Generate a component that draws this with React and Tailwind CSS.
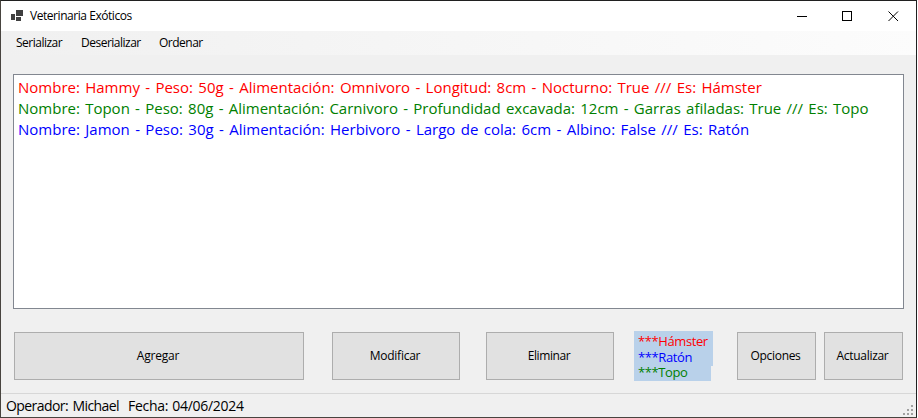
const entries = [
  {
    text: 'Nombre: Hammy - Peso: 50g - Alimentación: Omnivoro - Longitud: 8cm - Nocturno: True /// Es: Hámster',
    style: 'text-[#ff0000] [word-spacing:1.45px]',
  },
  {
    text: 'Nombre: Topon - Peso: 80g - Alimentación: Carnivoro - Profundidad excavada: 12cm - Garras afiladas: True /// Es: Topo',
    style: 'text-[#008000] [word-spacing:1.38px]',
  },
  {
    text: 'Nombre: Jamon - Peso: 30g - Alimentación: Herbivoro - Largo de cola: 6cm - Albino: False /// Es: Ratón',
    style: 'text-[#0000ff] [word-spacing:1.5px]',
  },
];

function Button({ className, children }) {
  return (
    <button
      className={`flex h-12 shrink-0 items-center justify-center border border-[#adadad] bg-[#e1e1e1] pr-[2px] text-[12px] ${className}`}
    >
      {children}
    </button>
  );
}

function TitleBar() {
  return (
    <header className="flex h-[30px] items-center bg-white pl-[10px] pr-[17px]">
      <svg width="12" height="11" viewBox="0 0 12 11" shapeRendering="crispEdges" className="mb-[2px]">
        <path fill="#3f3f3f" d="M0 4h4v6H0zM5 0h7v6H5zM5 7h5v4H5z" />
      </svg>
      <h1 className="ml-[7px] text-[12px] leading-4 tracking-[-0.45px]">Veterinaria Exóticos</h1>
      <div className="ml-auto flex items-center">
        <svg width="11" height="11" viewBox="0 0 11 11" shapeRendering="crispEdges">
          <path fill="#000" d="M0 5h10v1H0z" />
        </svg>
        <svg width="11" height="11" viewBox="0 0 11 11" shapeRendering="crispEdges" className="ml-[34px]">
          <path fill="none" stroke="#000" d="M.5.5h9v9h-9z" />
        </svg>
        <svg width="11" height="11" viewBox="0 0 11 11" className="ml-[35px]">
          <path fill="none" stroke="#000" d="M.5.5l9.5 9.5M10 .5L.5 10" />
        </svg>
      </div>
    </header>
  );
}

export default function App() {
  return (
    <div className="h-[418px] w-[918px] overflow-hidden bg-white font-['Open_Sans','Noto_Sans',sans-serif] text-black">
      <main className="flex h-[418px] w-[917px] flex-col border border-[#202020] border-b-[#48443f] border-l-[#48443f] bg-[#f0f0f0]">
        <TitleBar />
        <nav className="flex h-6 items-center bg-linear-to-r from-[#f0f0f0] to-[#fcfcfc] pl-[15px] text-[12px] tracking-[-0.5px]">
          <span className="w-[65px]">Serializar</span>
          <span className="w-[78px]">Deserializar</span>
          <span>Ordenar</span>
        </nav>
        <section className="ml-3 mt-[19px] h-[235px] w-[891px] border border-[#828790] bg-white pl-1 pt-[2px] text-[15px] leading-[21px]">
          {entries.map((entry) => (
            <p key={entry.text} className={`whitespace-nowrap ${entry.style}`}>
              {entry.text}
            </p>
          ))}
        </section>
        <section className="mt-[22px] flex h-[50px] items-center pl-[13px]">
          <Button className="w-[290px] tracking-[-0.2px]">Agregar</Button>
          <Button className="ml-7 w-32 tracking-[-0.25px]">Modificar</Button>
          <Button className="ml-[26px] w-32 tracking-[-0.4px]">Eliminar</Button>
          <div className="ml-5 h-[50px] w-[79px] text-[13px] tracking-[-0.4px]">
            <p className="h-5 bg-[#b9d1ea] pl-1 leading-5 text-[#ff0000]">***Hámster</p>
            <p className="h-[15px] bg-[#b9d1ea] pl-1 leading-[13px] text-[#0000ff]">***Ratón</p>
            <p className="h-[15px] w-[77px] bg-[#b9d1ea] pl-1 leading-[13px] text-[#008000]">***Topo</p>
          </div>
          <Button className="ml-6 w-[79px] tracking-[-0.3px]">Opciones</Button>
          <Button className="ml-2 w-[79px] tracking-[-0.3px]">Actualizar</Button>
        </section>
        <footer className="mt-auto flex h-6 items-center border-t border-[#d7d7d7] pl-[5px] text-[14px]">
          <span className="w-[122px] tracking-[-0.57px] [word-spacing:1.3px]">Operador: Michael</span>
          <span className="tracking-[-0.3px] [word-spacing:1px]">Fecha: 04/06/2024</span>
          <svg width="11" height="11" viewBox="0 0 11 11" shapeRendering="crispEdges" className="ml-auto mr-[2px] mt-[9px]">
            <path fill="#a0a0a0" d="M8 0h2v2H8zM4 4h2v2H4zM8 4h2v2H8zM0 8h2v2H0zM4 8h2v2H4zM8 8h2v2H8z" />
          </svg>
        </footer>
      </main>
    </div>
  );
}
